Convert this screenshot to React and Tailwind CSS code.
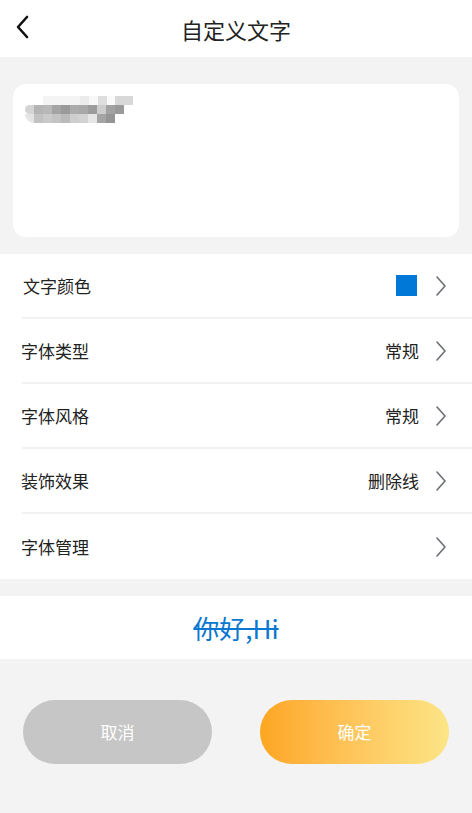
import React from "react";

const Chevron = () => (
  <svg width="12" height="22" viewBox="0 0 12 22" fill="none" className="shrink-0">
    <path d="M2 2 L10 11 L2 20" stroke="#6b6f75" strokeWidth="1.6" strokeLinecap="round" strokeLinejoin="round" />
  </svg>
);

const Row = ({ label, value, swatch, last, first }) => (
  <div className="pl-[22px]">
    <div className={"h-[65px] flex items-center pr-[25px]" + (last ? "" : " border-b-2 border-[#f2f2f2]")}>
      <span className={"text-[17px] text-[#222]" + (first ? " ml-[1px]" : " -ml-[1px]")}>{label}</span>
      <div className="ml-auto flex items-center">
        {swatch && <div className="w-[21px] h-[21px] bg-[#0078d7] mr-[18px]" />}
        {value && <span className="text-[17px] text-[#222] mr-[16px]">{value}</span>}
        <Chevron />
      </div>
    </div>
  </div>
);

export default function App() {
  return (
    <div
      className="w-[472px] h-[813px] bg-[#f3f3f3] flex flex-col overflow-hidden"
      style={{ fontFamily: '"Noto Sans CJK SC", "Noto Sans", sans-serif' }}
    >
      <div className="h-[57px] bg-white relative flex items-center justify-center shrink-0">
        <svg width="16" height="24" viewBox="0 0 16 24" className="absolute left-[14px] top-[15px]" fill="none">
          <path d="M13 2 L4 12 L13 22" stroke="#111" strokeWidth="2.6" strokeLinecap="round" strokeLinejoin="round" />
        </svg>
        <span className="text-[22px] text-[#222] leading-none">自定义文字</span>
      </div>

      <div className="px-[13px] pt-[27px] pb-[17px]">
        <div className="bg-white rounded-[13px] h-[153px] pt-[12px] pl-[12px]">
          <div className="flex flex-col w-[108px]">
            <div className="flex h-[9px] ml-[18px]">
              <div className="w-[38px] bg-[#f4f4f4]" />
              <div className="w-[9px] bg-[#ebebeb]" />
              <div className="w-[9px] bg-[#f8f8f8]" />
              <div className="w-[9px] bg-[#dedede]" />
              <div className="w-[9px] bg-[#fafafa]" />
              <div className="w-[18px] bg-[#d8d8d8]" />
            </div>
            <div className="flex h-[9px]">
              <div className="w-[9px] bg-[#d4d4d4] rounded-l-full" />
              <div className="w-[9px] bg-[#b4b4b4]" />
              <div className="w-[9px] bg-[#b8b8b8]" />
              <div className="w-[9px] bg-[#a4a4a4]" />
              <div className="w-[9px] bg-[#9a9a9a]" />
              <div className="w-[9px] bg-[#acacac]" />
              <div className="w-[9px] bg-[#a8a8a8]" />
              <div className="w-[9px] bg-[#9c9c9c]" />
              <div className="w-[9px] bg-[#cdcdcd]" />
              <div className="w-[9px] bg-[#a2a2a2]" />
              <div className="w-[9px] bg-[#9a9a9a]" />
            </div>
            <div className="flex h-[9px]">
              <div className="w-[9px] bg-[#e4e4e4] rounded-bl-full" />
              <div className="w-[9px] bg-[#c2c2c2]" />
              <div className="w-[9px] bg-[#cacaca]" />
              <div className="w-[9px] bg-[#c4c4c4]" />
              <div className="w-[9px] bg-[#bababa]" />
              <div className="w-[9px] bg-[#cecece]" />
              <div className="w-[9px] bg-[#d2d2d2]" />
              <div className="w-[9px] bg-[#e6e6e6]" />
              <div className="w-[9px] bg-[#a4a4a4]" />
              <div className="w-[9px] bg-[#959595]" />
            </div>
          </div>
        </div>
      </div>

      <div className="bg-white">
        <Row label="文字颜色" swatch first />
        <Row label="字体类型" value="常规" />
        <Row label="字体风格" value="常规" />
        <Row label="装饰效果" value="删除线" />
        <Row label="字体管理" last />
      </div>

      <div className="mt-[17px] bg-white h-[63px] flex items-center justify-center">
        <span className="text-[26px] text-[#0a78d0] line-through decoration-[2px] leading-none">你好,Hi</span>
      </div>

      <div className="flex justify-between px-[23px] mt-[41px]">
        <button className="w-[189px] h-[64px] rounded-full bg-[#c6c6c6] text-white text-[17px]">取消</button>
        <button className="w-[189px] h-[64px] rounded-full bg-gradient-to-r from-[#fda61f] to-[#fce586] text-white text-[17px]">确定</button>
      </div>
    </div>
  );
}
